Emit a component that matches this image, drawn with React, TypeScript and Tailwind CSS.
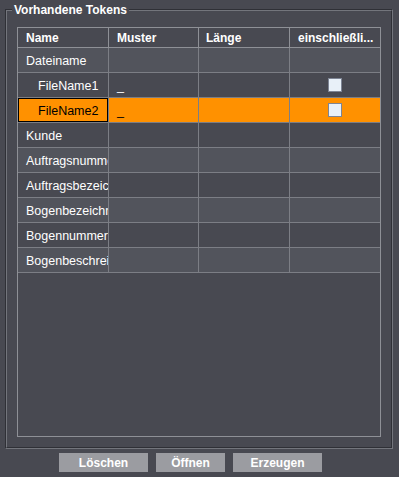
import React from "react";

type Row = { name: string; indent?: boolean; muster?: string; check?: boolean; selected?: boolean };

const rows: Row[] = [
  { name: "Dateiname" },
  { name: "FileName1", indent: true, muster: "_", check: true },
  { name: "FileName2", indent: true, muster: "_", check: true, selected: true },
  { name: "Kunde" },
  { name: "Auftragsnummer" },
  { name: "Auftragsbezeichnung" },
  { name: "Bogenbezeichnung" },
  { name: "Bogennummer" },
  { name: "Bogenbeschreibung" },
];

function Checkbox() {
  return <div className="w-[14px] h-[14px] bg-[#e8f0f8] border border-[#7d8494]" />;
}

export default function App() {
  return (
    <div
      className="w-[399px] h-[477px] bg-[#484951] overflow-hidden text-[12px] text-white"
      style={{ fontFamily: '"Liberation Sans", Arial, sans-serif' }}
    >
      <div className="pt-[9px] pl-[5px]">
        <div className="relative w-[388px] h-[440px] border-l border-t border-[#2f3036] border-r border-b border-r-[#73757c] border-b-[#73757c]">
          <div className="absolute left-[6px] top-[-7px] px-[2px] bg-[#484951] font-bold leading-[14px] text-[12px]">
            Vorhandene Tokens
          </div>
          <div className="w-full h-full border-l border-t border-[#73757c] border-r border-b border-r-[#2f3036] border-b-[#2f3036] pl-[10px] pt-[16px]">
            <div className="w-[364px] h-[410px] border border-[#8e9096] bg-[#484951]">
              {/* header */}
              <div className="flex h-[20px] border-b border-[#8e9096] font-bold">
                <div className="w-[91px] border-r border-[#8e9096] pl-[8px] flex items-center">Name</div>
                <div className="w-[90px] border-r border-[#8e9096] pl-[8px] flex items-center">Muster</div>
                <div className="w-[91px] border-r border-[#8e9096] pl-[7px] flex items-center">Länge</div>
                <div className="w-[90px] pl-[8px] flex items-center whitespace-nowrap overflow-hidden">einschließli...</div>
              </div>
              {rows.map((r, i) => {
                const bg = r.selected ? "bg-[#ff9100]" : i % 2 === 0 ? "bg-[#52545c]" : "bg-[#484951]";
                const txt = r.selected ? "text-black" : "text-white";
                return (
                  <div key={r.name} className={`flex h-[25px] border-b border-[#7c7e85] text-[12.5px] ${bg} ${txt}`}>
                    <div className="w-[91px] border-r border-[#7c7e85] overflow-hidden">
                      <div
                        className={`h-full flex items-center pt-[2px] whitespace-nowrap overflow-hidden ${
                          r.selected ? "border border-black pl-[19px]" : r.indent ? "pl-[20px]" : "pl-[8px]"
                        }`}
                      >
                        {r.name}
                      </div>
                    </div>
                    <div className="w-[90px] border-r border-[#7c7e85] pl-[8px] flex items-center pt-[2px]">
                      {r.muster ?? ""}
                    </div>
                    <div className="w-[91px] border-r border-[#7c7e85]" />
                    <div className="w-[90px] flex items-center justify-center">
                      {r.check ? <Checkbox /> : null}
                    </div>
                  </div>
                );
              })}
            </div>
          </div>
        </div>
      </div>
      <div className="flex pl-[59px] pt-[4px] gap-[8px] font-bold">
        <div className="w-[89px] h-[19px] bg-[#9b9ca1] flex items-center justify-center">Löschen</div>
        <div className="w-[69px] h-[19px] bg-[#9b9ca1] flex items-center justify-center">Öffnen</div>
        <div className="w-[89px] h-[19px] bg-[#9b9ca1] flex items-center justify-center">Erzeugen</div>
      </div>
    </div>
  );
}
